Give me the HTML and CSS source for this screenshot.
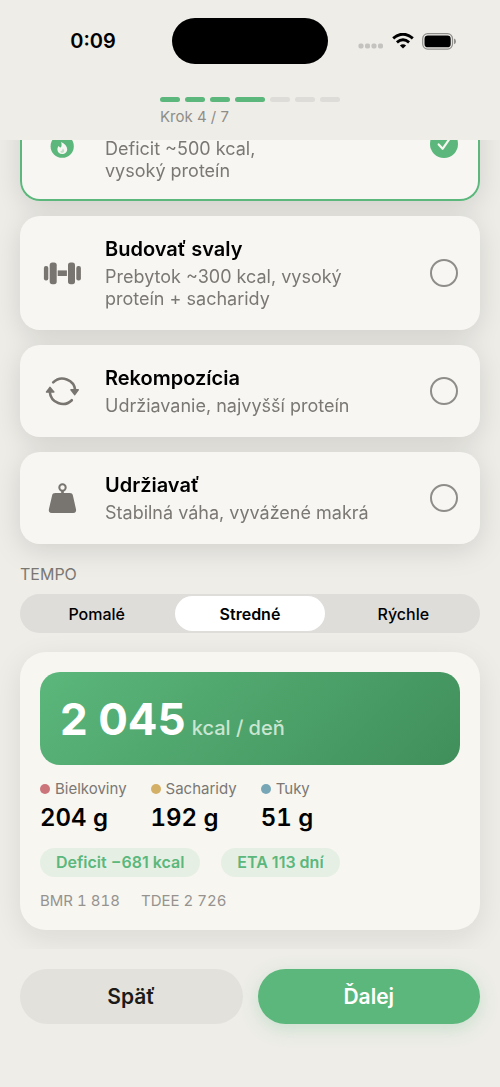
FILE: index.html
```
<!DOCTYPE html>
<html lang="sk">
<head>
<meta charset="utf-8">
<meta name="viewport" content="width=device-width, initial-scale=1">
<title>Krok 4 / 7</title>
<link rel="stylesheet" href="styles.css">
</head>
<body>
<div class="app">
  <header class="top">
    <div class="status">
      <div class="clock">0:09</div>
      <div class="island"></div>
      <div class="indicators">
        <svg class="signal" width="26" height="6" viewBox="0 0 26 6" fill="#c4c3bf"><rect x="0.5" y="0.5" width="5" height="5" rx="1.8"/><rect x="7" y="0.5" width="5" height="5" rx="1.8"/><rect x="13.5" y="0.5" width="5" height="5" rx="1.8"/><rect x="20" y="0.5" width="5" height="5" rx="1.8"/></svg>
        <svg class="wifi" width="22" height="16" viewBox="0 0 22 16" fill="none" stroke="#000"><path d="M1.2 5.4Q11 -2.9 20.8 5.4" stroke-width="3"/><path d="M4.9 9.3Q11 4.2 17.1 9.3" stroke-width="2.9"/><path d="M11 15.6 7.9 12.6Q11 9.9 14.1 12.6Z" fill="#000" stroke="none"/></svg>
        <svg class="battery" width="35" height="17" viewBox="0 0 35 17"><rect x="0.7" y="0.7" width="29.8" height="15.4" rx="5" fill="none" stroke="#8f8e8b" stroke-width="1.2"/><rect x="2.5" y="2.5" width="26.2" height="11.8" rx="3.4"/><path d="M32 5.6Q34 6.4 34 8.4T32 11.2Z" fill="#8f8e8b"/></svg>
      </div>
    </div>
    <div class="progress">
      <div class="steps">
        <span class="step done"></span><span class="step done"></span><span class="step done"></span><span class="step done current"></span><span class="step"></span><span class="step"></span><span class="step"></span>
      </div>
      <div class="step-label">Krok 4 / 7</div>
    </div>
  </header>

  <main class="content">
    <div class="goals">
      <label class="card selected">
        <svg class="icon" width="44" height="40" viewBox="0 0 44 40"><circle cx="22.2" cy="22.2" r="11.6" fill="#5bb77b"/><path d="M21.2 18C25 19.8 27.2 22.4 27.2 25.2 27.2 28.2 25 30 22.2 30 19.4 30 17.4 28.1 17.4 25.5 17.4 24 18 22.8 18.8 22.1 19.2 23 19.7 23.6 20.4 23.5 21.8 23.2 21.8 20.6 21.2 18Z" fill="#f7f6f2"/><path d="M22.6 24.6C23.8 25.4 24.2 26.2 24.2 27 24.2 28.1 23.3 28.8 22.2 28.8 21.1 28.8 20.4 28.1 20.4 27.2 21.8 27.2 22.7 26.2 22.6 24.6Z" fill="#5bb77b" opacity="0.35"/></svg>
        <span class="text"><span class="desc">Deficit ~500 kcal,<br>vysoký proteín</span></span>
        <input class="radio" type="radio" name="goal" checked>
      </label>
      <label class="card">
        <svg class="icon" width="44" height="40" viewBox="0 0 44 40" fill="#78746f"><rect x="3.9" y="13" width="4.4" height="14.6" rx="2"/><rect x="9.7" y="9.6" width="7" height="21.6" rx="2.6"/><rect x="17.7" y="17.4" width="9.2" height="5.6"/><rect x="28" y="9.6" width="7" height="21.6" rx="2.6"/><rect x="36.3" y="13" width="4.6" height="14.6" rx="2"/></svg>
        <span class="text"><span class="title">Budovať svaly</span><span class="desc">Prebytok ~300 kcal, vysoký<br>proteín + sacharidy</span></span>
        <input class="radio" type="radio" name="goal">
      </label>
      <label class="card">
        <svg class="icon" width="44" height="40" viewBox="0 0 44 40"><path d="M13.2 11.4A13 13 0 0 1 35.3 19.5M31.8 29.2A13 13 0 0 1 9.8 21" fill="none" stroke="#78746f" stroke-width="2.6" stroke-linecap="round"/><path d="M31 18.8H38.2L34.7 23.6ZM6.6 21H13.8L10 16.4Z" fill="#78746f" stroke="#78746f" stroke-width="1.6" stroke-linejoin="round"/></svg>
        <span class="text"><span class="title">Rekompozícia</span><span class="desc">Udržiavanie, najvyšší proteín</span></span>
        <input class="radio" type="radio" name="goal">
      </label>
      <label class="card">
        <svg class="icon" width="44" height="40" viewBox="0 0 44 40"><circle cx="22.5" cy="9.5" r="3.2" fill="none" stroke="#78746f" stroke-width="2"/><path d="M21.2 12.2H23.8V15H29.8C31.5 15 32.5 15.8 32.9 17.4L36 31.2C36.5 33.6 35.4 35 33.2 35H11.7C9.5 35 8.4 33.6 8.9 31.2L12.1 17.4C12.5 15.8 13.5 15 15.2 15H21.2Z" fill="#78746f"/></svg>
        <span class="text"><span class="title">Udržiavať</span><span class="desc">Stabilná váha, vyvážené makrá</span></span>
        <input class="radio" type="radio" name="goal">
      </label>
    </div>

    <h2 class="section">TEMPO</h2>
    <div class="segments">
      <button class="segment" type="button">Pomalé</button>
      <button class="segment active" type="button">Stredné</button>
      <button class="segment" type="button">Rýchle</button>
    </div>

    <section class="summary">
      <div class="hero"><span class="kcal">2 045</span><span class="unit">kcal / deň</span></div>
      <div class="macros">
        <div class="macro"><div class="macro-name"><i class="dot protein"></i>Bielkoviny</div><div class="amount">204 g</div></div>
        <div class="macro"><div class="macro-name"><i class="dot carbs"></i>Sacharidy</div><div class="amount">192 g</div></div>
        <div class="macro"><div class="macro-name"><i class="dot fat"></i>Tuky</div><div class="amount">51 g</div></div>
      </div>
      <div class="pills"><span class="pill">Deficit −681 kcal</span><span class="pill">ETA 113 dní</span></div>
      <div class="rates"><span>BMR 1 818</span><span>TDEE 2 726</span></div>
    </section>
  </main>

  <footer class="actions">
    <button class="action back" type="button">Späť</button>
    <button class="action next" type="button">Ďalej</button>
  </footer>
</div>
</body>
</html>
```
FILE: styles.css
```
* { box-sizing: border-box; }
body {
  margin: 0;
  background: #eeede8;
  color: #000;
  font-family: Inter, "Noto Sans", sans-serif;
}
button { font: inherit; border: 0; padding: 0; }
.app { display: flex; flex-direction: column; height: 100vh; }

.top { flex: none; height: 140px; padding-top: 18px; }
.status { display: grid; grid-template-columns: 1fr 156px 1fr; align-items: center; }
.clock { padding-left: 14px; text-align: center; font-size: 20px; font-weight: 600; }
.island { height: 46px; border-radius: 23px; background: #000; }
.indicators { display: flex; align-items: center; padding-left: 30px; }
.signal { margin: 9px 8px 0 0; }
.wifi { margin-right: 8px; }
.progress { width: 180px; margin: 33px auto 0; }
.steps { display: flex; gap: 5px; }
.step { flex: 2; height: 5px; border-radius: 3px; background: #dddcd8; }
.step.done { background: #5bb77b; }
.step.current { flex: 3; }
.step-label { margin-top: 5px; font-size: 15px; line-height: 20px; color: #8f8d89; }

.content {
  flex: 1;
  min-height: 0;
  display: flex;
  flex-direction: column;
  justify-content: flex-end;
  padding: 0 20px 19px;
  overflow: hidden;
}
.content > * { flex: none; }
.goals {
  display: flex;
  flex-direction: column;
  gap: 15px;
  filter: drop-shadow(0 6px 14px rgba(0, 0, 0, 0.12));
}
.card {
  display: flex;
  align-items: center;
  min-height: 92px;
  padding: 16px 22px 16px 20px;
  border-radius: 20px;
  background: #f7f6f2;
}
.card:has(br) { min-height: 114px; }
.card.selected { box-shadow: inset 0 0 0 2px #5bb77b; }
.card.selected .text { align-self: flex-end; }
.icon { flex: none; margin-right: 21px; }
.text { flex: 1; display: flex; flex-direction: column; gap: 2px; margin-bottom: 3px; }
.title { font-size: 20px; line-height: 30px; font-weight: 600; }
.desc { font-size: 18px; line-height: 22px; color: #7b7874; }
.radio {
  appearance: none;
  flex: none;
  width: 28px;
  height: 28px;
  margin: 0;
  border: 2px solid #8f8d89;
  border-radius: 50%;
}
.radio:checked {
  border: 0;
  background: #5bb77b url("data:image/svg+xml,%3Csvg xmlns='http://www.w3.org/2000/svg' viewBox='0 0 28 28'%3E%3Cpath d='M8.7 14.4 12.6 18.8 19.5 8.8' fill='none' stroke='%23f7f6f2' stroke-width='2.2' stroke-linecap='round' stroke-linejoin='round'/%3E%3C/svg%3E");
}

.section { margin: 20px 0 10px; font-size: 16px; line-height: 20px; font-weight: 400; color: #7b7874; }
.segments {
  display: grid;
  grid-template-columns: 1fr 1fr 1fr;
  gap: 4px;
  height: 39px;
  padding: 2px;
  border-radius: 20px;
  background: #dedddA;
}
.segment { border-radius: 18px; background: none; color: #000; font-size: 16px; font-weight: 500; }
.segment.active { background: #fff; font-weight: 600; }

.summary {
  margin-top: 19px;
  padding: 20px 20px 19px;
  border-radius: 26px;
  background: #f7f6f1;
  box-shadow: 0 8px 30px rgba(40, 20, 0, 0.09);
}
.hero {
  display: flex;
  align-items: baseline;
  gap: 6px;
  padding: 19px 20px 17px;
  border-radius: 20px;
  background: linear-gradient(135deg, #5bb77b, #408f5b);
  color: #fff;
}
.kcal { font-size: 44px; line-height: 57px; font-weight: 700; }
.unit { font-size: 20px; font-weight: 500; color: #c9e6d2; }
.macros { display: flex; gap: 24px; margin-top: 14px; }
.macro-name { display: flex; align-items: center; gap: 5px; font-size: 15px; line-height: 20px; color: #7b7874; }
.dot { width: 10px; height: 10px; border-radius: 50%; }
.protein { background: #cb757a; }
.carbs { background: #d4b066; }
.fat { background: #77a7b6; }
.amount { margin-top: 4px; font-size: 24px; line-height: 30px; font-weight: 600; font-variant-numeric: tabular-nums; }
.pills { display: flex; gap: 21px; margin-top: 15px; }
.pill {
  padding: 0 16px;
  border-radius: 15px;
  background: #e5efe4;
  color: #5bb77b;
  font-size: 16px;
  line-height: 29px;
  font-weight: 600;
}
.rates { display: flex; gap: 21px; margin-top: 14px; font-size: 15px; line-height: 20px; color: #96938f; font-variant-numeric: tabular-nums; }

.actions { flex: none; display: flex; gap: 15px; padding: 20px 20px 63px; background: #eeede8; }
.action { flex: 1; height: 55px; border-radius: 28px; font-size: 21px; font-weight: 600; }
.back { background: #e2e1dc; color: #1b1a18; }
.next { background: #5bb77b; color: #fff; box-shadow: 0 5px 18px rgba(91, 183, 123, 0.25); }
```
